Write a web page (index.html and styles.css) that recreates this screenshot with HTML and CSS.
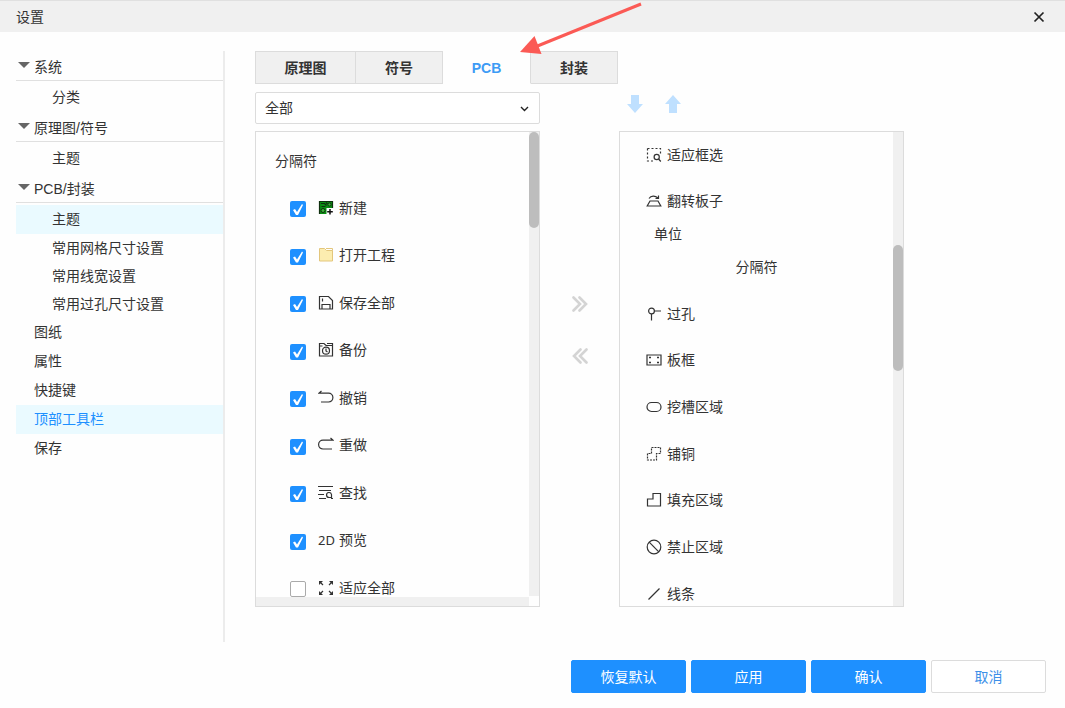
FILE: index.html
```html
<!DOCTYPE html>
<html lang="zh-CN">
<head>
<meta charset="utf-8">
<title>设置</title>
<link rel="stylesheet" href="styles.css">
</head>
<body>
<div class="dialog">
  <header class="titlebar">
    <h1 class="title">设置</h1>
    <button class="close" aria-label="关闭"><svg width="12" height="12" viewBox="0 0 12 12"><path d="M1.5 1.5l9 9M10.5 1.5l-9 9" fill="none" stroke="#222" stroke-width="1.7"/></svg></button>
  </header>

  <div class="body">
    <nav class="sidebar">
      <button class="group">系统</button>
      <a class="sub" href="#">分类</a>
      <button class="group">原理图/符号</button>
      <a class="sub" href="#">主题</a>
      <button class="group">PCB/封装</button>
      <a class="sub marked" href="#">主题</a>
      <a class="sub" href="#">常用网格尺寸设置</a>
      <a class="sub" href="#">常用线宽设置</a>
      <a class="sub" href="#">常用过孔尺寸设置</a>
      <a class="top" href="#">图纸</a>
      <a class="top" href="#">属性</a>
      <a class="top" href="#">快捷键</a>
      <a class="top marked current" href="#">顶部工具栏</a>
      <a class="top" href="#">保存</a>
    </nav>

    <main class="content">
      <div class="tabs" role="tablist">
        <button class="tab wide" role="tab">原理图</button>
        <button class="tab" role="tab">符号</button>
        <button class="tab active" role="tab" aria-selected="true">PCB</button>
        <button class="tab" role="tab">封装</button>
      </div>

      <div class="transfer">
        <section class="column">
          <div class="filter">
            <select class="select" aria-label="分类筛选"><option>全部</option></select>
            <svg class="chevron" width="9" height="6" viewBox="0 0 9 6"><path d="M1 1l3.5 3.5L8 1" fill="none" stroke="#222" stroke-width="1.4"/></svg>
          </div>
          <div class="panel">
            <div class="view">
              <div class="list-area">
                <p class="separator">分隔符</p>
                <ul class="checks">
                  <li><label class="item"><input type="checkbox" class="check" checked>
                    <svg class="icon" viewBox="0 0 16 16"><path d="M1 1h13v13H1z" fill="#0a8f12"/><path d="M1.500 14V1.500h13V8M3 3.500h3.500l2 2M3.500 6.500h4M8 2.500l1.500 1.500" fill="none" stroke="#10300f" stroke-width="1.200"/><circle cx="11.500" cy="4.500" r="1.600" fill="#3db33b" stroke="#10300f"/><circle cx="5" cy="10.500" r="2" fill="#3db33b" stroke="#10300f"/><path d="M8.500 8H16v8H8.500z" fill="#fefefe"/><path d="M12 9v5.500M9.200 11.700h5.600" stroke="#111" stroke-width="1.500"/></svg>新建</label></li>
                  <li><label class="item"><input type="checkbox" class="check" checked>
                    <svg class="icon" viewBox="0 0 16 16"><path d="M1.500 1.500h5l2 2h6v10.500h-13z" fill="#fcedb0" stroke="#e3c67c"/><path d="M8 1.500h6.500v2" fill="none" stroke="#e3c67c"/></svg>打开工程</label></li>
                  <li><label class="item"><input type="checkbox" class="check" checked>
                    <svg class="icon line" viewBox="0 0 16 16"><path d="M1.500 1.500h9l4 4v8.500h-13zM4 14V9.500h8V14M4.500 3.500v3"/></svg>保存全部</label></li>
                  <li><label class="item"><input type="checkbox" class="check" checked>
                    <svg class="icon line" viewBox="0 0 16 16"><path d="M1.500 14V1.500h4.500l2 2h6.500V14zM9 1.500h5.500v2M1.500 4h3"/><circle cx="8" cy="8.700" r="3.500"/><path d="M8 6.500V9l1.500 1"/></svg>备份</label></li>
                  <li><label class="item"><input type="checkbox" class="check" checked>
                    <svg class="icon line" viewBox="0 0 16 16"><path d="M3.500 1L1 3.200H10.500a4.400 4.400 0 0 1 0 8.800H3"/></svg>撤销</label></li>
                  <li><label class="item"><input type="checkbox" class="check" checked>
                    <svg class="icon line" viewBox="0 0 16 16"><path d="M12.500 1L15 3.200H5a4.400 4.400 0 0 0 0 8.800h9"/></svg>重做</label></li>
                  <li><label class="item"><input type="checkbox" class="check" checked>
                    <svg class="icon line" viewBox="0 0 16 16"><path d="M0 1.500h15M1 5.500h12M0 9.500h6M1 13.500h7"/><path d="M13.500 13.500V9.500a2.500 2.500 0 1 0-2.500 3h2M13 13.500h2"/></svg>查找</label></li>
                  <li><label class="item"><input type="checkbox" class="check" checked>
                    <span class="icon glyph">2D</span>预览</label></li>
                  <li><label class="item"><input type="checkbox" class="check">
                    <svg class="icon line" viewBox="0 0 16 16"><path d="M1.500 1.500l3.500 3.500M14.500 1.500L11 5M1.500 14.500L5 11M14.500 14.500L11 11"/><path d="M1 1h4L1 5zM15 1h-4l4 4zM1 15v-4l4 4zM15 15v-4l-4 4z" fill="#333" stroke="none"/></svg>适应全部</label></li>
                </ul>
              </div>
              <div class="track-x"></div>
            </div>
            <div class="track-y short"><div class="thumb first"></div></div>
          </div>
        </section>

        <div class="movers">
          <button class="mover" aria-label="添加"><svg width="16" height="16" viewBox="0 0 16 16"><path d="M1.500 1.500L8 8l-6.500 6.500M7.500 1.500L14 8l-6.500 6.500" fill="none" stroke="#d4d4d4" stroke-width="2.600" stroke-linecap="round"/></svg></button>
          <button class="mover" aria-label="移除"><svg width="16" height="16" viewBox="0 0 16 16"><path d="M8.500 1.500L2 8l6.500 6.500M14.500 1.500L8 8l6.500 6.500" fill="none" stroke="#d4d4d4" stroke-width="2.600" stroke-linecap="round"/></svg></button>
        </div>

        <section class="column">
          <div class="order">
            <button class="mover" aria-label="下移"><svg width="16" height="18" viewBox="0 0 16 18"><path d="M4 0h8v9h4l-8 9-8-9h4z" fill="#bfe0ff"/></svg></button>
            <button class="mover" aria-label="上移"><svg width="16" height="18" viewBox="0 0 16 18"><path d="M4 18h8V9h4L8 0 0 9h4z" fill="#bfe0ff"/></svg></button>
          </div>
          <div class="panel">
            <div class="view">
              <ul class="chosen">
                <li class="entry"><svg class="icon line" viewBox="0 0 16 16"><path d="M1.500 1.500h13v5M1.500 1.500v12.500h6" stroke-dasharray="2 2"/><circle cx="10.700" cy="10" r="2.600"/><path d="M12.600 12l2.200 2.500"/></svg>适应框选</li>
                <li class="entry"><svg class="icon line" viewBox="0 0 16 16"><path d="M4 8h8l2.800 5H1.200zM3 5.500C5 2.500 9 2.500 12 5M12.500 2.500v3H9.500"/></svg>翻转板子</li>
                <li class="unit">单位</li>
                <li class="divider">分隔符</li>
                <li class="entry"><svg class="icon line" viewBox="0 0 16 16"><circle cx="5.500" cy="5" r="2.900"/><path d="M8.500 5H15M5.500 8v6.500"/></svg>过孔</li>
                <li class="entry"><svg class="icon line" viewBox="0 0 16 16"><path d="M1 3h14v10H1z"/><path d="M3 5.500h2M11 5.500h2M3 10.500h2M11 10.500h2" stroke-width="1.600"/></svg>板框</li>
                <li class="entry"><svg class="icon line" viewBox="0 0 16 16"><rect x="1" y="3.500" width="14" height="9" rx="4.500"/></svg>挖槽区域</li>
                <li class="entry"><svg class="icon line" viewBox="0 0 16 16"><path d="M5.500 1.500h9v6h-4v6.500h-9V7.500h4z" stroke-dasharray="2 1"/></svg>铺铜</li>
                <li class="entry"><svg class="icon line" viewBox="0 0 16 16"><path d="M7 1.500h7.500v12.500h-13V7H7z"/></svg>填充区域</li>
                <li class="entry"><svg class="icon line" viewBox="0 0 16 16"><circle cx="8" cy="8" r="6.800"/><path d="M3.200 3.200l9.600 9.600"/></svg>禁止区域</li>
                <li class="entry"><svg class="icon line" viewBox="0 0 16 16"><path d="M2.500 13.500l11-11"/></svg>线条</li>
              </ul>
            </div>
            <div class="track-y"><div class="thumb middle"></div></div>
          </div>
        </section>
      </div>
      <svg class="pointer" width="124" height="54" viewBox="0 0 124 54"><path d="M122 3L16 46" stroke="#fb5a55" stroke-width="3"/><path d="M1 51L15.500 35l7 18z" fill="#fb5a55"/></svg>
    </main>
  </div>

  <footer class="footer">
    <button class="btn primary">恢复默认</button>
    <button class="btn primary">应用</button>
    <button class="btn primary">确认</button>
    <button class="btn">取消</button>
  </footer>
</div>
</body>
</html>
```
FILE: styles.css
```css
* { box-sizing: border-box; }

body {
  margin: 0;
  background: #fefefe;
  color: #333;
  font: 14px/20px "Liberation Sans", "Noto Sans CJK SC", sans-serif;
}

button, select, input { font: inherit; color: inherit; margin: 0; }
button { padding: 0; border: 0; background: none; cursor: pointer; }
ul { margin: 0; padding: 0; list-style: none; }
a { color: inherit; text-decoration: none; }
svg { display: block; }

.dialog { display: flex; flex-direction: column; height: 100vh; }

.titlebar {
  display: flex;
  align-items: center;
  justify-content: space-between;
  height: 32px;
  padding: 0 20px 0 16px;
  border-top: 1px solid #e0e0e0;
  background: #f0f0f0;
}
.title { margin: 0; font-size: 14px; font-weight: 400; }

.body { display: flex; flex: 1; min-height: 0; padding: 19px 0 18px 16px; }

/* Navigation */
.sidebar {
  display: flex;
  flex-direction: column;
  flex: none;
  width: 209px;
  border-right: 2px solid #ececec;
}
.group {
  height: 30px;
  margin-bottom: 2px;
  padding: 2px 0 0 2px;
  display: flex;
  align-items: center;
  gap: 4px;
  flex: none;
  border-bottom: 1px solid #e0e0e0;
}
.group::before {
  content: "";
  margin-bottom: 4px;
  border: 6px solid transparent;
  border-top-color: #666;
  border-bottom-width: 0;
}
.sub { padding-left: 36px; line-height: 29px; }
.marked ~ .sub { line-height: 28px; }
.top { padding-left: 18px; line-height: 29px; }
.marked { background: #eafaff; }
.current { color: #1e90ff; }

/* Content */
.content {
  position: relative;
  display: flex;
  flex-direction: column;
  flex: 1;
  min-width: 0;
  padding: 0 161px 35px 30px;
}
.tabs { display: flex; flex: none; }
.tab {
  width: 87px;
  height: 33px;
  border: 1px solid #dcdcdc;
  border-left-width: 0;
  background: #f0f0f0;
  font-weight: 700;
}
.tab.wide { width: 101px; border-left-width: 1px; }
.tab.active { width: 88px; background: #fefefe; border-color: transparent #dcdcdc transparent transparent; color: #3d9bf5; }

.pointer { position: absolute; left: 294px; top: -50px; }

.transfer {
  display: grid;
  grid-template-columns: 1fr 79px 1fr;
  flex: 1;
  min-height: 0;
  padding-top: 8px;
}
.column { display: flex; flex-direction: column; gap: 7px; min-height: 0; }

.filter { position: relative; flex: none; }
.select {
  display: block;
  width: 100%;
  height: 32px;
  padding: 0 9px;
  border: 1px solid #dcdcdc;
  border-radius: 2px;
  background: #fff;
  appearance: none;
}
.chevron { position: absolute; right: 11px; top: 14px; pointer-events: none; }

.order { display: flex; gap: 22px; flex: none; align-items: center; height: 32px; padding: 0 0 8px 8px; }

.panel { display: flex; flex: 1; min-height: 0; border: 1px solid #dcdcdc; }
.view { display: flex; flex-direction: column; flex: 1; min-width: 0; overflow: hidden; }
.list-area { flex: 1; min-height: 0; overflow: hidden; }
.track-x { flex: none; height: 9px; background: #f0f0f0; }
.track-y { flex: none; width: 10px; background: #f0f0f0; }
.track-y.short { margin-bottom: 10px; }
.thumb { border-radius: 5px; background: #bdbdbd; }
.thumb.first { height: 96px; }
.thumb.middle { height: 126px; margin-top: 113px; }

.separator { margin: 0; padding: 19px 19px 13px; }
.checks { padding-left: 34px; }
.item { display: flex; align-items: center; height: 47px; }
.checks li:nth-child(even) .item { height: 48px; }

.check {
  appearance: none;
  width: 16px;
  height: 16px;
  margin: 3px 12px 0 0;
  border: 1px solid #aaa;
  border-radius: 2px;
  background: #fff;
}
.check:checked { border: 0; background: #1e90ff; }
.check:checked::before {
  content: "";
  display: block;
  width: 16px;
  height: 16px;
  background: #fff;
  clip-path: polygon(3px 9px, 5px 8px, 7px 11px, 12px 3px, 13px 4px, 8px 14px, 6px 14px);
}

.icon { flex: none; width: 16px; height: 16px; margin-right: 5px; }
.line { fill: none; stroke: #333; stroke-width: 1.2px; }
.glyph { line-height: 16px; font-size: 13px; font-family: "Noto Sans", sans-serif; }

.chosen { padding-left: 26px; }
.entry { display: flex; align-items: center; height: 47px; }
.entry:first-child { height: 45px; }
.entry:nth-child(3n) { height: 46px; }
.unit { height: 20px; padding-left: 8px; margin-bottom: 13px; }
.divider { height: 20px; margin: 0 0 13px -26px; text-align: center; }

.movers { display: flex; flex-direction: column; align-items: center; justify-content: center; gap: 36px; padding-bottom: 40px; }

/* Actions */
.footer { display: flex; justify-content: flex-end; gap: 5px; padding: 0 19px 15px; }
.btn {
  width: 115px;
  height: 33px;
  border: 1px solid #dcdcdc;
  border-radius: 2px;
  background: #fff;
  color: #3d8fe8;
}
.primary { border-color: #1e90ff; background: #1e90ff; color: #fff; }
```
